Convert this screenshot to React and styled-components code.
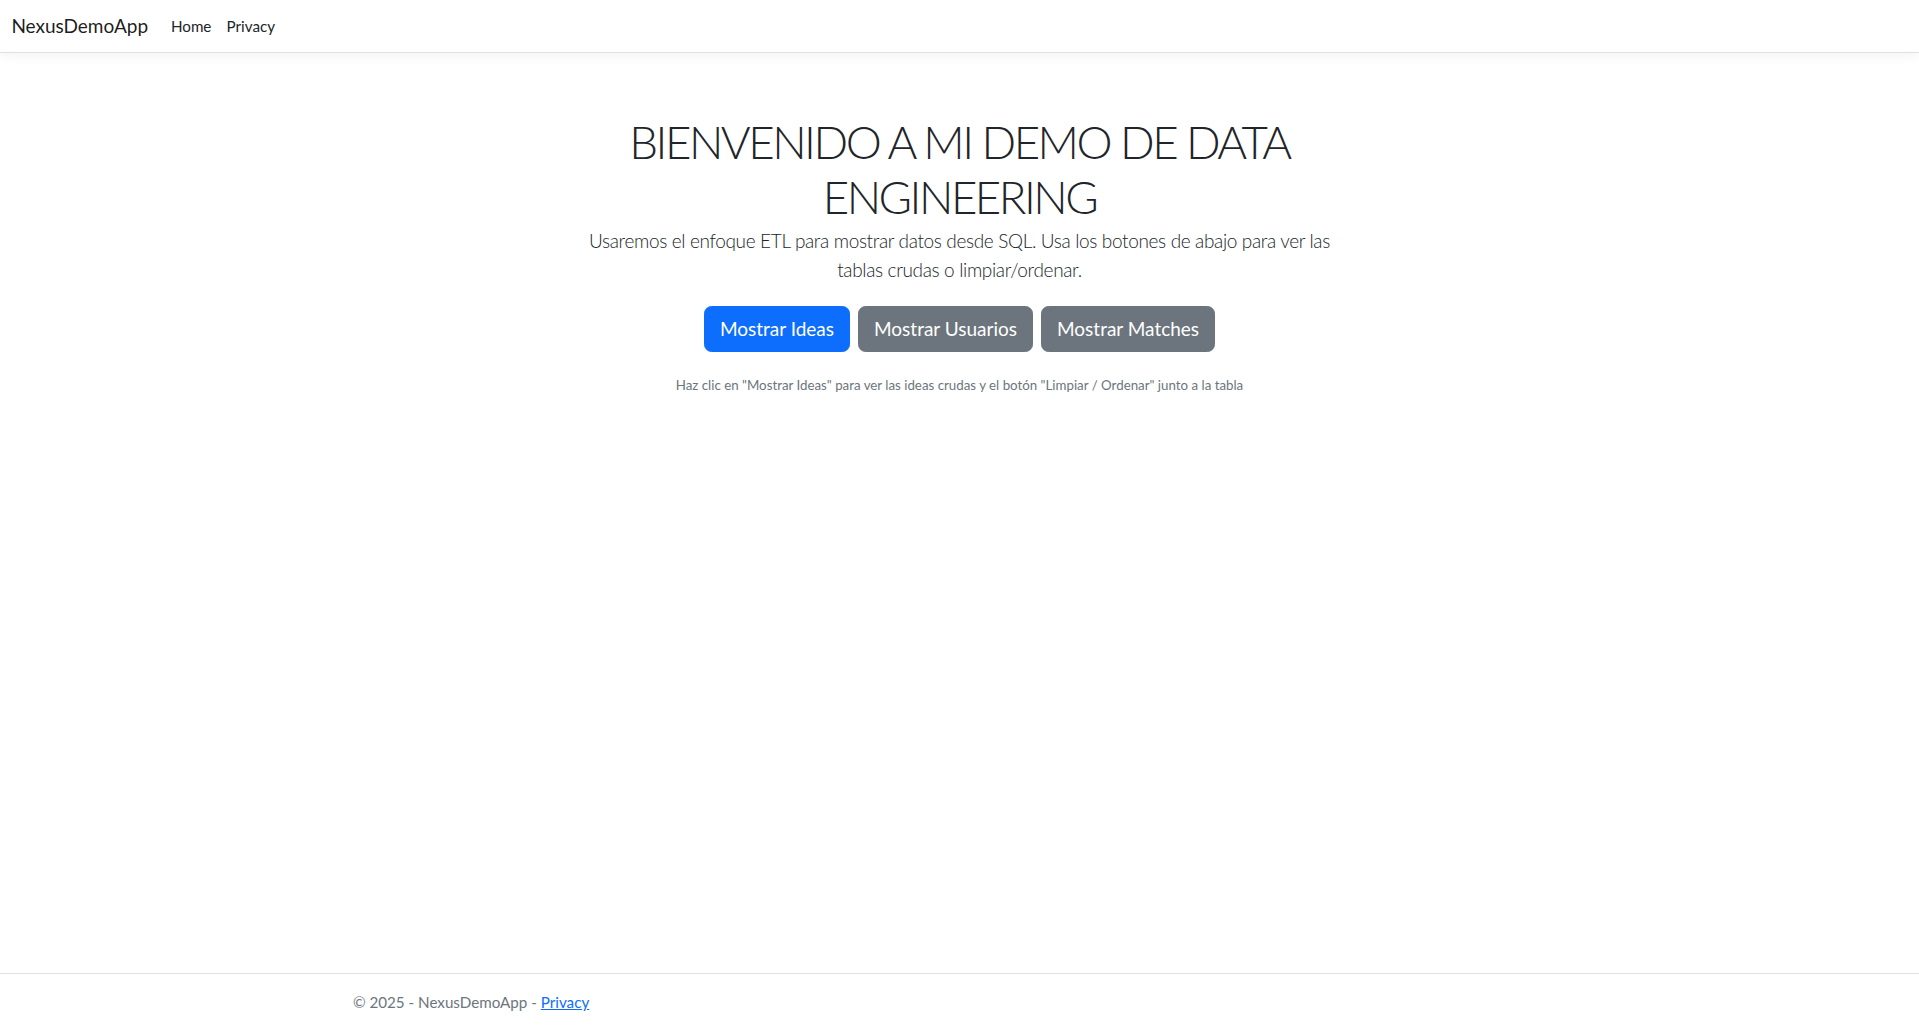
import { createGlobalStyle, styled } from "styled-components";

const GlobalStyle = createGlobalStyle`
  *, *::before, *::after {
    box-sizing: border-box;
  }
  body {
    margin: 0;
    font-family: Lato, "Open Sans", "Liberation Sans", sans-serif;
    font-size: 15.2px;
    line-height: 1.5;
    color: #212529;
    background: #fff;
  }
`;

const Page = styled.div`
  min-height: 100vh;
  display: flex;
  flex-direction: column;
`;

const Navbar = styled.nav`
  height: 53px;
  background: #fff;
  border-bottom: 1px solid #dee2e6;
  box-shadow: 0 3.8px 11.4px rgba(0, 0, 0, 0.05);
  display: flex;
  align-items: center;
  padding: 0 11.4px;
`;

const Brand = styled.a`
  font-size: 19px;
  color: rgba(0, 0, 0, 0.9);
  text-decoration: none;
  margin-right: 15.2px;
`;

const NavList = styled.ul`
  display: flex;
  list-style: none;
  margin: 0;
  padding: 0;
`;

const NavLink = styled.a`
  display: block;
  padding: 7.6px;
  font-size: 15.2px;
  color: #212529;
  text-decoration: none;
`;

const Main = styled.main`
  flex: 1;
  padding-top: 62px;
`;

const Hero = styled.section`
  max-width: 760px;
  margin: 0 auto;
  text-align: center;
`;

const Title = styled.h1`
  margin: 0 0 3px;
  font-size: 45.6px;
  font-weight: 300;
  line-height: 1.2;
  letter-spacing: -2.5px;
`;

const Lead = styled.p`
  margin: 0 0 22px;
  font-size: 19px;
  font-weight: 300;
  line-height: 1.5;
  letter-spacing: -0.35px;
`;

const ButtonRow = styled.div`
  display: flex;
  justify-content: center;
  gap: 7.6px;
`;

const Button = styled.button`
  font-family: inherit;
  font-size: 19px;
  line-height: 1.5;
  padding: 7.6px 15.2px;
  border: 1px solid ${(p) => (p.$primary ? "#0d6efd" : "#6c757d")};
  border-radius: 7.6px;
  background: ${(p) => (p.$primary ? "#0d6efd" : "#6c757d")};
  color: #fff;
  cursor: pointer;
`;

const Hint = styled.p`
  margin: 23.5px 0 0;
  font-size: 13.3px;
  color: #6c757d;
  text-align: center;
`;

const Footer = styled.footer`
  border-top: 1px solid #dee2e6;
  line-height: 56px;
  color: #6c757d;
  font-size: 15.2px;
  white-space: nowrap;
`;

const FooterInner = styled.div`
  max-width: 1236px;
  margin: 0 auto;
  padding: 0 11.4px;
`;

const FooterLink = styled.a`
  color: #0d6efd;
  text-decoration: underline;
`;

export default function App() {
  return (
    <Page>
      <GlobalStyle />
      <Navbar>
        <Brand href="#">NexusDemoApp</Brand>
        <NavList>
          <li>
            <NavLink href="#">Home</NavLink>
          </li>
          <li>
            <NavLink href="#">Privacy</NavLink>
          </li>
        </NavList>
      </Navbar>

      <Main>
        <Hero>
          <Title>BIENVENIDO A MI DEMO DE DATA ENGINEERING</Title>
          <Lead>
            Usaremos el enfoque ETL para mostrar datos desde SQL. Usa los botones de abajo para ver las tablas
            crudas o limpiar/ordenar.
          </Lead>
        </Hero>
        <ButtonRow>
          <Button $primary>Mostrar Ideas</Button>
          <Button>Mostrar Usuarios</Button>
          <Button>Mostrar Matches</Button>
        </ButtonRow>
        <Hint>
          Haz clic en "Mostrar Ideas" para ver las ideas crudas y el botón "Limpiar / Ordenar" junto a la tabla
        </Hint>
      </Main>

      <Footer>
        <FooterInner>
          © 2025 - NexusDemoApp - <FooterLink href="#">Privacy</FooterLink>
        </FooterInner>
      </Footer>
    </Page>
  );
}
